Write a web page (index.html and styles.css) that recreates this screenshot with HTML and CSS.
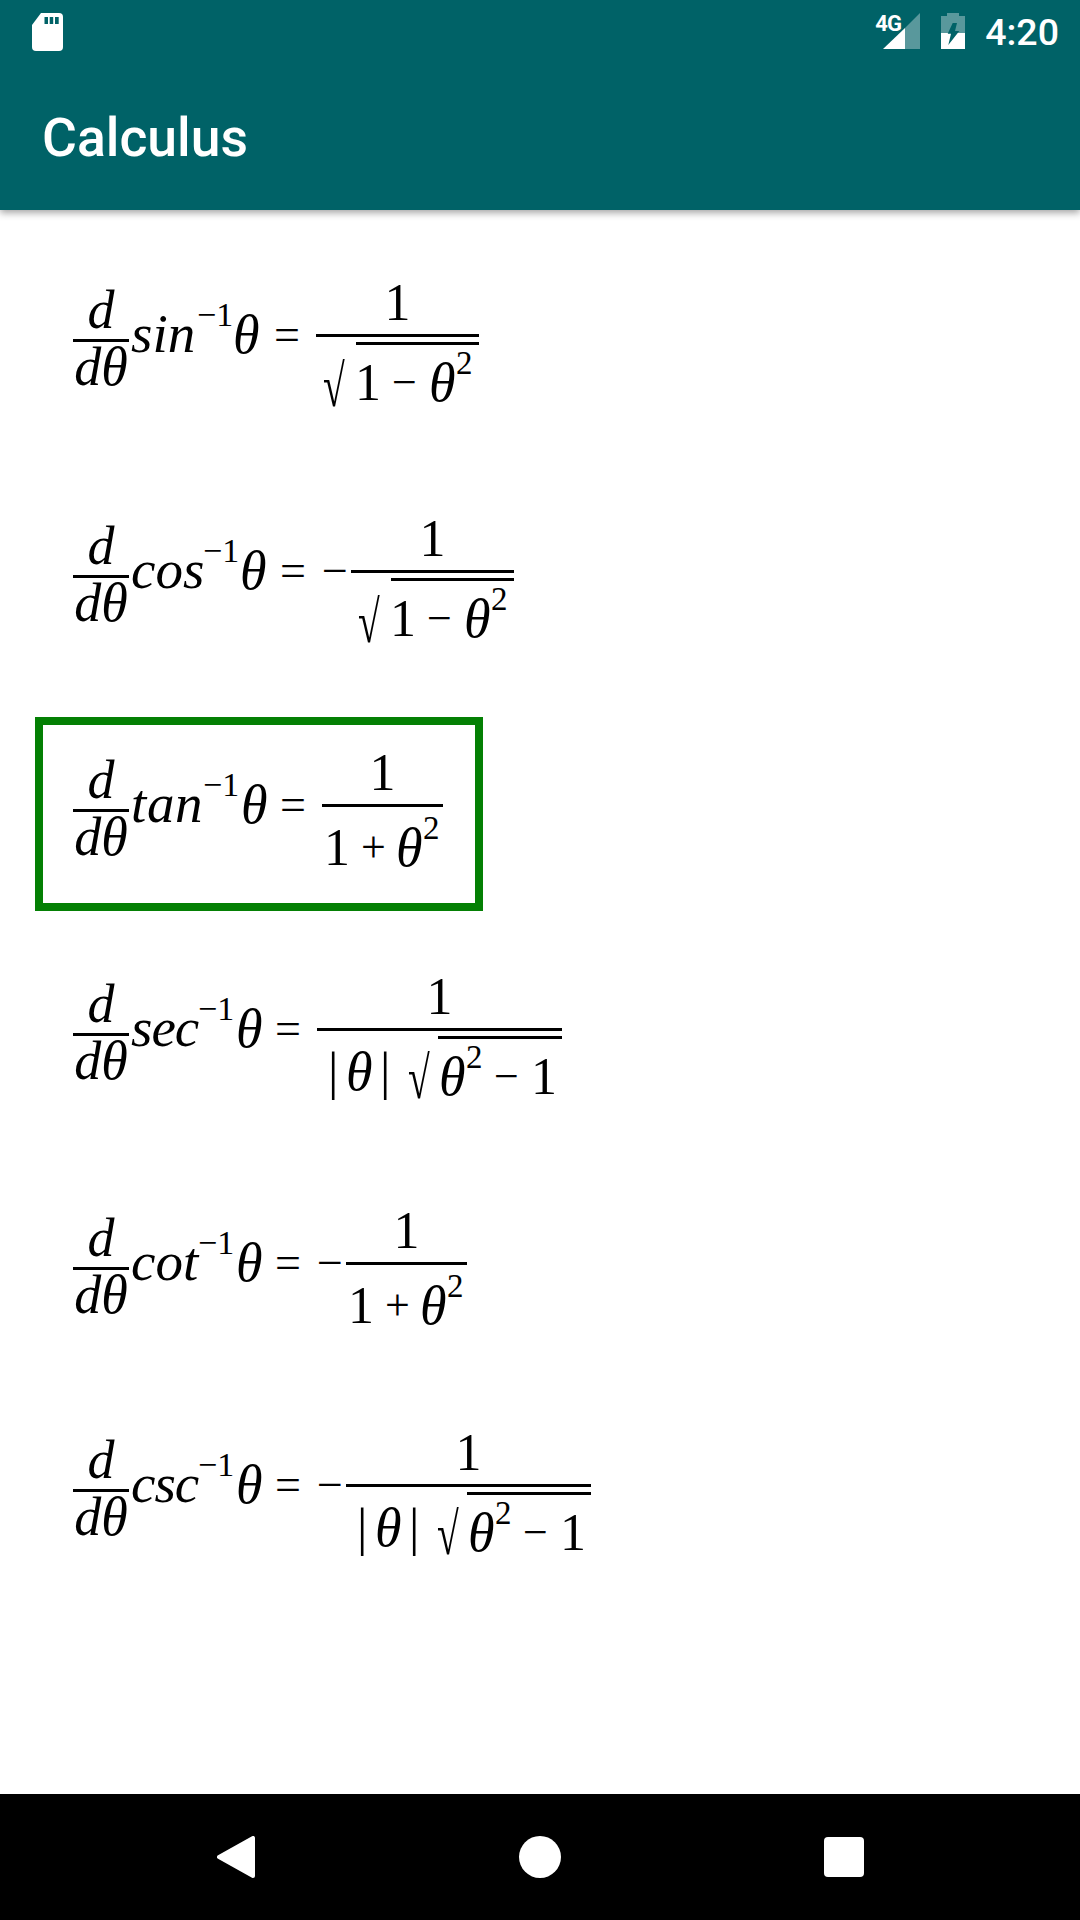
FILE: index.html
```html
<!DOCTYPE html>
<html lang="en">
<head>
<meta charset="utf-8">
<title>Calculus</title>
<link rel="stylesheet" href="styles.css">
</head>
<body>
<div class="screen">
  <header class="appbar">
    <div class="statusbar">
      <svg class="sd" viewBox="0 0 31 38" width="31" height="38"><path class="ico" d="M9 0H27a4 4 0 0 1 4 4V34a4 4 0 0 1-4 4H4a4 4 0 0 1-4-4V12Z"/><path class="cut" d="M12.500 4h3.500v7h-3.500zM17.700 4h3.500v7h-3.500zM23 4h3.700v7H23z"/></svg>
      <div class="status-right">
        <div class="signal">
          <span class="net">4G</span>
          <svg viewBox="0 0 37 36" width="37" height="36"><path class="ico dim" d="M37 0V36H22V15Z"/><path class="ico" d="M22 15V36H0Z"/></svg>
        </div>
        <svg class="battery" viewBox="0 0 24 36" width="24" height="36"><path class="ico dim" d="M6 0h12v3h6v17H0V3h6z"/><path class="ico" d="M0 20h24v16H0z"/><path class="cut" d="M11.700 10H16L14 18H18.300L7.300 32 10 20.700H6.700Z"/></svg>
        <span class="time">4:20</span>
      </div>
    </div>
    <div class="toolbar"><h1 class="title">Calculus</h1></div>
  </header>

  <main class="list">
    <div class="eq eq-root">
      <div class="dfrac"><span class="dn">d</span><span class="dd">dθ</span></div>
      <span class="fn w-sin">sin</span><span class="sup">−1</span><span class="th">θ</span><span class="op">=</span>
      <div class="frac frac-root">
        <span class="num">1</span>
        <div class="den den-root"><span class="rad">√</span><div class="radicand"><span class="dg">1</span><span class="minus">−</span><span class="var">θ</span><span class="pow">2</span></div></div>
      </div>
    </div>

    <div class="eq eq-root">
      <div class="dfrac"><span class="dn">d</span><span class="dd">dθ</span></div>
      <span class="fn w-cos">cos</span><span class="sup">−1</span><span class="th">θ</span><span class="op">=</span><span class="neg">−</span>
      <div class="frac frac-root">
        <span class="num">1</span>
        <div class="den den-root"><span class="rad">√</span><div class="radicand"><span class="dg">1</span><span class="minus">−</span><span class="var">θ</span><span class="pow">2</span></div></div>
      </div>
    </div>

    <div class="eq eq-plain eq-box">
      <div class="dfrac"><span class="dn">d</span><span class="dd">dθ</span></div>
      <span class="fn w-tan">tan</span><span class="sup">−1</span><span class="th">θ</span><span class="op">=</span>
      <div class="frac frac-plain">
        <span class="num">1</span>
        <div class="den den-plain"><span class="dg">1</span><span class="plus">+</span><span class="var">θ</span><span class="pow">2</span></div>
      </div>
    </div>

    <div class="eq eq-root">
      <div class="dfrac"><span class="dn">d</span><span class="dd">dθ</span></div>
      <span class="fn w-sec">sec</span><span class="sup">−1</span><span class="th">θ</span><span class="op">=</span>
      <div class="frac frac-abs">
        <span class="num">1</span>
        <div class="den den-root"><span class="abs abs-l">|</span><span class="var abs-var">θ</span><span class="abs abs-r">|</span><span class="rad rad-abs">√</span><div class="radicand radicand-abs"><span class="var">θ</span><span class="pow">2</span><span class="minus">−</span><span class="dg">1</span></div></div>
      </div>
    </div>

    <div class="eq eq-plain eq-tight">
      <div class="dfrac"><span class="dn">d</span><span class="dd">dθ</span></div>
      <span class="fn w-cot">cot</span><span class="sup">−1</span><span class="th">θ</span><span class="op">=</span><span class="neg">−</span>
      <div class="frac frac-plain">
        <span class="num">1</span>
        <div class="den den-plain"><span class="dg">1</span><span class="plus">+</span><span class="var">θ</span><span class="pow">2</span></div>
      </div>
    </div>

    <div class="eq eq-root">
      <div class="dfrac"><span class="dn">d</span><span class="dd">dθ</span></div>
      <span class="fn w-csc">csc</span><span class="sup">−1</span><span class="th">θ</span><span class="op">=</span><span class="neg">−</span>
      <div class="frac frac-abs">
        <span class="num">1</span>
        <div class="den den-root"><span class="abs abs-l">|</span><span class="var abs-var">θ</span><span class="abs abs-r">|</span><span class="rad rad-abs">√</span><div class="radicand radicand-abs"><span class="var">θ</span><span class="pow">2</span><span class="minus">−</span><span class="dg">1</span></div></div>
      </div>
    </div>
  </main>

  <nav class="navbar">
    <svg viewBox="0 0 38 42" width="38" height="42"><path class="ico" stroke="#fff" stroke-width="4" stroke-linejoin="round" d="M36 2V40L2 21Z"/></svg>
    <svg viewBox="0 0 42 42" width="42" height="42"><circle class="ico" cx="21" cy="21" r="21"/></svg>
    <svg viewBox="0 0 40 40" width="40" height="40"><rect class="ico" width="40" height="40" rx="4"/></svg>
  </nav>
</div>
</body>
</html>
```

FILE: styles.css
```css
* { box-sizing: border-box; }
html, body { margin: 0; padding: 0; background: #fff; }
.screen { width: 1080px; height: 1920px; display: flex; flex-direction: column; overflow: hidden; font-family: "Liberation Serif", serif; color: #000; }

.ico { fill: #fff; }
.dim { opacity: .35; }
.cut { fill: #006267; }

.appbar { height: 210px; background: #006267; color: #fff; box-shadow: 0 3px 7px rgba(0,0,0,.35); position: relative; font-family: Roboto, sans-serif; flex: none; }
.statusbar { height: 63px; display: flex; justify-content: space-between; align-items: flex-start; padding: 13px 21px 0 32px; }
.status-right { display: flex; align-items: flex-start; }
.signal { position: relative; width: 46px; height: 36px; display: flex; justify-content: flex-end; margin-right: 21px; }
.net { position: absolute; left: 1px; top: 1px; font-size: 22px; line-height: 20px; font-weight: 700; letter-spacing: -.8px; }
.battery { margin-right: 20px; }
.time { font-size: 37.500px; line-height: 36px; font-weight: 500; margin-top: 1px; }
.toolbar { height: 147px; display: flex; align-items: center; padding: 2px 0 0 42px; }
.title { margin: 0; font-size: 53.500px; font-weight: 500; line-height: 64px; }

.list { flex: 1; padding: 35px 0 0 35px; display: flex; flex-direction: column; gap: 28px; }
.eq { display: flex; align-items: flex-start; width: fit-content; border: 8px solid transparent; padding: 0 32px 0 30px; font-size: 54px; line-height: 60px; white-space: nowrap; }
.eq-root { height: 208px; --top: 86px; }
.eq-plain { height: 194px; --top: 84px; }
.eq-tight { height: 192px; }
.eq-box { border-color: #048004; }

/* left d/dθ fraction */
.dfrac { width: 56px; margin-top: calc(var(--top) - 56px); display: flex; flex-direction: column; align-items: center; font-style: italic; }
.dn { height: 56px; width: 100%; text-align: center; border-bottom: 3px solid #000; line-height: 54px; box-sizing: content-box; }
.dd { height: 50px; line-height: 50px; }

.fn { font-style: italic; margin-left: 2px; font-size: 55px; margin-top: calc(var(--top) - 35px); }
.w-sin { width: 66px; }
.w-cos { width: 72px; }
.w-tan { width: 72px; letter-spacing: .6px; }
.w-sec { width: 67px; letter-spacing: -1px; }
.w-cot { width: 67px; }
.w-csc { width: 67px; letter-spacing: -1px; }
.sup { width: 38px; font-size: 34px; line-height: 36px; margin-top: calc(var(--top) - 42px); }
.th { width: 39px; font-style: italic; margin-top: calc(var(--top) - 34px); }
.w-sin ~ .th { width: 41px; margin-left: -2px; }
.w-cos ~ .th { width: 40px; margin-left: -1px; }
.op { width: 42px; font-size: 46px; margin-top: calc(var(--top) - 34px); }
.neg { width: 29px; font-size: 46px; margin-top: calc(var(--top) - 34px); }

/* right fraction */
.frac { display: flex; flex-direction: column; margin-top: calc(var(--top) - 61px); }
.num { height: 56px; line-height: 49px; text-align: center; border-bottom: 3px solid #000; box-sizing: content-box; font-size: 52px; }
.frac-root { width: 163px; }
.frac-plain { width: 121px; }
.frac-abs { width: 245px; }

.den { display: flex; font-size: 52px; }
.den-plain { padding: 11px 0 0 3px; line-height: 60px; }
.den-root { justify-content: flex-end; line-height: 60px; }
.rad { width: 29px; margin-right: 4px; font-size: 44px; margin-top: 10px; transform: scale(.9, 1.35); transform-origin: left top; }
.radicand { width: 123px; border-top: 3px solid #000; margin-top: 5px; padding-top: 8px; display: flex; }
.radicand-abs { width: 124px; }
.dg { width: 37px; margin-left: -1px; }
.minus { width: 37px; font-size: 44px; }
.plus { width: 35px; font-size: 44px; }
.var { font-style: italic; width: 27px; font-size: 54px; }
.pow { font-size: 33px; line-height: 34px; margin-top: -7px; width: 18px; }
.radicand-abs .var { margin-left: 1px; }
.radicand-abs .pow { width: 30px; }
.radicand-abs .minus { width: 37px; margin-left: -2px; }
.radicand-abs .dg { margin-left: 0; width: 25px; }
.abs { margin-top: 11px; }
.abs-l { width: 18px; }
.abs-r { width: 28px; }
.abs-var { margin-top: 11px; width: 34px; }
.rad-abs { margin-top: 8px; width: 26px; }

.navbar { height: 126px; background: #000; flex: none; display: flex; align-items: center; padding-left: 217px; }
.navbar svg:nth-child(2) { margin-left: 264px; }
.navbar svg:nth-child(3) { margin-left: 263px; }
```
